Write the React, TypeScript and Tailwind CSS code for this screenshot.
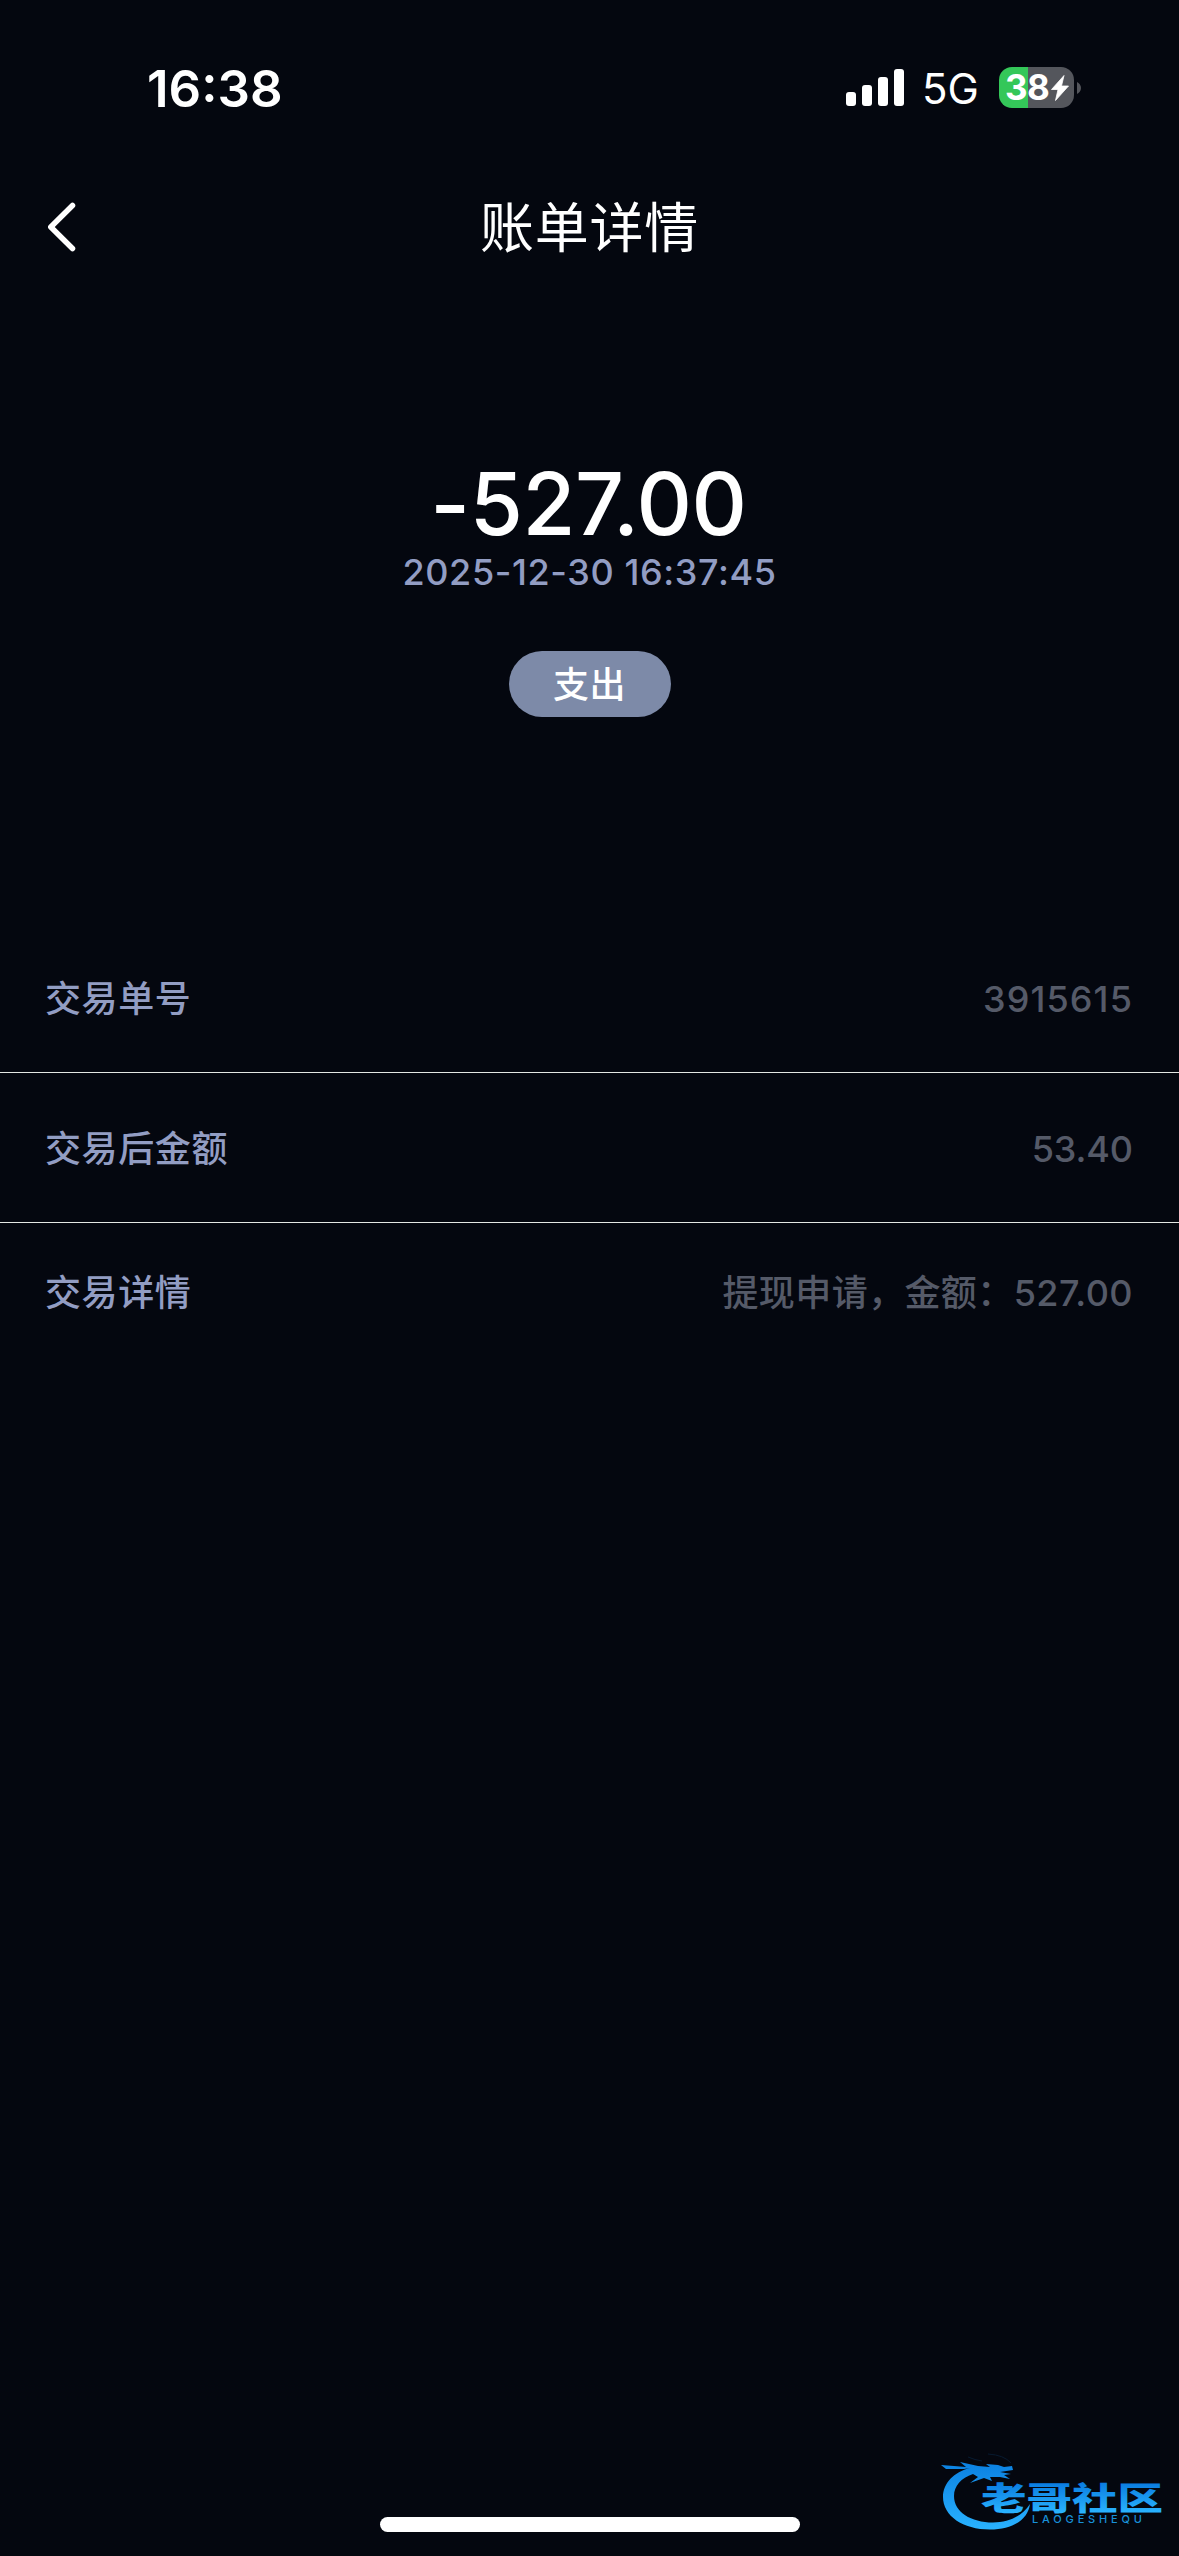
import React from 'react';

interface DetailRowProps {
  label: string;
  value: string;
  className: string;
  valueClassName: string;
}

const StatusBar: React.FC = () => (
  <div className="h-[150px] shrink-0 flex justify-between pl-[147px] pr-[98px] pt-[58px]">
    <div className="h-[60px] flex items-center text-[51px] leading-none font-semibold">16:38</div>
    <div className="h-[60px] flex items-center">
      {/* Signal */}
      <div className="flex items-end gap-[6px] h-[37px] mb-[1px]">
        <div className="w-[10px] h-[14px] rounded-[3px] bg-white" />
        <div className="w-[10px] h-[21px] rounded-[3px] bg-white" />
        <div className="w-[10px] h-[29px] rounded-[3px] bg-white" />
        <div className="w-[10px] h-[37px] rounded-[3px] bg-white" />
      </div>
      <div className="ml-[18px] w-[77px] text-[42px] leading-none mt-[2px]">5G</div>
      {/* Battery */}
      <div className="w-[75px] h-[41px] mb-[1px] rounded-[13px] overflow-hidden flex items-center pl-[6px] bg-[linear-gradient(to_right,#34c759_29px,#54565c_29px)]">
        <span className="w-[46px] text-[35px] leading-none font-bold tracking-[-0.5px]">38</span>
        <svg className="w-[18px] h-[26px]" viewBox="0 0 18 26" fill="#fff" stroke="#fff" strokeWidth="0.8" strokeLinejoin="round">
          <path d="M13 0.5 L0.5 14.5 H7 L4.5 25.5 L17.5 11 H10.5 Z" />
        </svg>
      </div>
      <svg className="ml-[3px] w-[4px] h-[12px]" viewBox="0 0 4 12" fill="#54565c">
        <path d="M0 0 C2 1 4 3 4 6 C4 9 2 11 0 12 Z" />
      </svg>
    </div>
  </div>
);

const DetailRow: React.FC<DetailRowProps> = ({ label, value, className, valueClassName }) => (
  <div className={`flex items-center justify-between pl-[45px] pr-[46px] text-[36px] leading-none font-medium ${className}`}>
    <span className="text-[#929dc3] tracking-[0.6px]">{label}</span>
    <span className={`text-[#555a68] ${valueClassName}`}>{value}</span>
  </div>
);

const CommunityLogo: React.FC = () => (
  <svg className="absolute left-[920px] top-[2440px] w-[259px] h-[116px]" viewBox="0 0 259 116">
    <defs>
      <linearGradient id="ring" x1="0" y1="20" x2="0" y2="90" gradientUnits="userSpaceOnUse">
        <stop offset="0" stopColor="#0a7fe0" />
        <stop offset="1" stopColor="#29b2ff" />
      </linearGradient>
      <linearGradient id="word" x1="0" y1="43" x2="0" y2="73" gradientUnits="userSpaceOnUse">
        <stop offset="0" stopColor="#0a7ce0" />
        <stop offset="1" stopColor="#2ab4ff" />
      </linearGradient>
    </defs>
    {/* Dragon */}
    <path
      fill="url(#ring)"
      d="M50 28 C34 32 23 43 23 57 C23 76 43 89.500 70 89.500 C92 89.500 108 80 110 64 C102 76 89 82.500 73 82.500 C51 82.500 34 72 34 56 C34 46 41 38 53 34 L58 37 L50 43 L64 38 L72 41 L70 37 L80 37 L90 39 L84 35 L91 34 L80 32 L93 30 L92 26 L84 27 L78 25 L66 24 L70 27 L58 26 L40 22 L46 27 L34 26 L21 25 L26 29 L44 29 Z"
    />
    <path fill="none" stroke="#071a30" strokeWidth="1" d="M68 14 Q84 15 91 23 M48 17 Q55 20 62 21" />
    <text
      x="61"
      y="70"
      fontSize="32"
      fontWeight="900"
      fill="url(#word)"
      textLength="182"
      lengthAdjust="spacingAndGlyphs"
      className="font-['Noto_Sans_CJK_SC',sans-serif]"
    >
      老哥社区
    </text>
    <text x="112" y="82.500" fontSize="11" fontWeight="500" fill="#1890d8" textLength="110" className="font-['Inter',sans-serif]">
      LAOGESHEQU
    </text>
  </svg>
);

export default function App() {
  return (
    <div className="relative w-[1179px] h-[2556px] overflow-hidden flex flex-col bg-[#04070f] text-white font-['Inter','Noto_Sans_CJK_SC',sans-serif]">
      <StatusBar />

      {/* Header */}
      <div className="h-[154px] shrink-0 grid grid-cols-[1fr_auto_1fr] items-center px-[46px]">
        <svg className="w-[31px] h-[50px]" viewBox="0 0 31 50" fill="none" stroke="#fff" strokeWidth="5.5" strokeLinecap="round" strokeLinejoin="round">
          <path d="M26.500 3.500 L4.800 25 L26.500 46.500" />
        </svg>
        <h1 className="pt-[3px] text-[54px] leading-none font-normal tracking-[0.8px]">账单详情</h1>
      </div>

      {/* Amount */}
      <div className="h-[618px] shrink-0 flex flex-col items-center pt-[156px]">
        <div className="pr-[2px] text-[86px] leading-[88px] font-medium tracking-[-0.4px]">-527.00</div>
        <div className="text-[36px] leading-[48px] font-medium tracking-[0.6px] text-[#929dc3]">2025-12-30 16:37:45</div>
        <div className="mt-[55px] pt-[2px] w-[162px] h-[66px] rounded-full bg-[#7d8aa8] flex items-center justify-center text-[36px] leading-none font-medium tracking-[0.6px]">
          支出
        </div>
      </div>

      {/* Details */}
      <DetailRow label="交易单号" value="3915615" className="h-[151px] pt-[3px] border-b border-[#e4e8e4]" valueClassName="tracking-[1.1px]" />
      <DetailRow label="交易后金额" value="53.40" className="h-[150px] pt-[2px] border-b border-[#e4e8e4]" valueClassName="tracking-[-0.1px]" />
      <DetailRow label="交易详情" value="提现申请，金额：527.00" className="h-[139px] pt-[1px]" valueClassName="tracking-[0.4px]" />

      <div className="mt-auto mb-[24px] w-[420px] h-[15px] self-center rounded-full bg-white" />
      <CommunityLogo />
    </div>
  );
}
